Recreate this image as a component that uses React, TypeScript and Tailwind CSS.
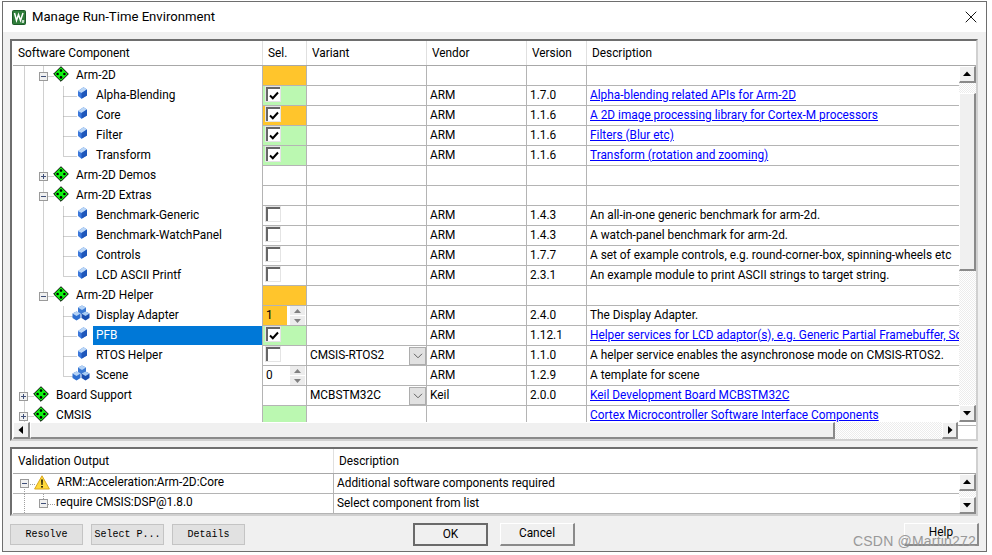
import React from 'react';
import { X } from 'lucide-react';

const FONT = "font-['Roboto',sans-serif]";

// ---------- drawn icons ----------
const Diamond = () => (
  <svg width="16" height="16" viewBox="0 0 16 16" className="shrink-0">
    <path d="M8 .7 15.3 8 8 15.3 .7 8Z" fill="#10f510" stroke="#000" />
    <circle cx="8" cy="4.6" r="1.3" fill="#000" />
    <circle cx="8" cy="11.4" r="1.3" fill="#000" />
    <circle cx="4.6" cy="8" r="1.3" fill="#000" />
    <circle cx="11.4" cy="8" r="1.3" fill="#000" />
  </svg>
);

const Gem = () => (
  <svg width="9" height="12" viewBox="0 0 9 12" className="shrink-0">
    <path d="M5.5 .3 9 2.5v6L3.5 11.7 0 9V4Z" fill="#3b78dc" />
    <path d="M5.5 .3 9 2.5 3.5 6 0 4Z" fill="#bcd8f7" />
    <path d="M3.5 6 9 2.5v6L3.5 11.7Z" fill="#1f57bb" />
  </svg>
);

const Bundle = () => (
  <svg width="18" height="16" viewBox="0 0 18 16" className="shrink-0">
    <path d="M10 .5 14 2.5v4.5L10 9.5 6 7V2.5Z" fill="#3a78d4" />
    <path d="M10 .5 14 2.5 10 5 6 2.5Z" fill="#b4d2f5" />
    <path d="M4.5 6.5 8.5 8.5v4.5l-4 2.5-4-2.5V8.5Z" fill="#2f6fd0" />
    <path d="M4.5 6.5 8.5 8.5l-4 2.5-4-2.5Z" fill="#b4d2f5" />
    <path d="M13.5 6.5 17.5 8.5v4.5l-4 2.5-4-2.5V8.5Z" fill="#1b4fb0" />
    <path d="M13.5 6.5 17.5 8.5l-4 2.5-4-2.5Z" fill="#a9ccf3" />
  </svg>
);

const Warning = () => (
  <svg width="16" height="15" viewBox="0 0 16 15" className="shrink-0">
    <path d="M8 .8 15.4 14H.6Z" fill="#ffd93b" stroke="#d8a520" strokeLinejoin="round" />
    <path d="M7.2 4.5h1.6l-.3 5.5h-1Z" fill="#000" />
    <rect x="7.2" y="11" width="1.6" height="1.6" fill="#000" />
  </svg>
);

const AppIcon = () => (
  <svg width="14" height="15" viewBox="0 0 14 15" className="shrink-0">
    <rect x=".5" y=".5" width="13" height="14" rx="1" fill="#2f7d3a" stroke="#1c5a28" />
    <path d="M2.5 3 4.5 10.5 6.5 4.5 8.5 10.5 11 3" fill="none" stroke="#fff" strokeWidth="1.5" />
    <path d="M10 10.5h2v1h-2v1h2" fill="none" stroke="#fff" strokeWidth=".7" />
  </svg>
);

const Expander = ({ open }: { open: boolean }) => (
  <span className="w-[9px] h-[9px] border border-[#9a9a9a] bg-[#f0f0f0] flex items-center justify-center relative shrink-0">
    <span className="w-[5px] h-px bg-[#3f4f78]" />
    {!open && <span className="absolute w-px h-[5px] bg-[#3f4f78]" />}
  </span>
);

const Tri = ({ dir }: { dir: 'up' | 'down' | 'left' | 'right' }) => {
  const d = { up: 'M4 1.5 8 6H0Z', down: 'M0 2H8L4 6.5Z', left: 'M6 0V8L1.5 4Z', right: 'M2 0V8L6.5 4Z' }[dir];
  return (
    <svg width="8" height="8" viewBox="0 0 8 8">
      <path d={d} fill="#000" />
    </svg>
  );
};

const RAISED = 'bg-[#f0f0f0] border-t border-l border-white border-r-2 border-b-2 border-r-[#8a8a8a] border-b-[#8a8a8a]';

const ScrollBtn = ({ dir, className = '' }: { dir: 'up' | 'down' | 'left' | 'right'; className?: string }) => (
  <div className={`${RAISED} flex items-center justify-center shrink-0 ${className}`}>
    <Tri dir={dir} />
  </div>
);

const DITHER = 'bg-[repeating-conic-gradient(#ececec_0_25%,#ffffff_0_50%)] bg-[length:2px_2px]';

const Check = ({ on }: { on: boolean }) => (
  <span className="w-[16px] h-[16px] ml-[2px] mb-[3px] border border-[#e4e4e4] shrink-0 flex">
    <span className="flex-1 border-t-2 border-l-2 border-t-[#666666] border-l-[#666666] bg-white flex items-center justify-center">
      {on && (
        <svg width="10" height="9" viewBox="0 0 10 9">
          <path d="M1 4.5 3.8 7.2 9 1.5" fill="none" stroke="#000" strokeWidth="2" />
        </svg>
      )}
    </span>
  </span>
);

const Spin = ({ value, bg }: { value: string; bg: string }) => (
  <div className="flex h-full w-full bg-white">
    <span className={`w-[24px] pl-[3px] leading-[19px] ${bg}`}>{value}</span>
    <span className="ml-[3px] w-[15px] flex flex-col justify-center gap-px">
      <span className="h-[9px] bg-[#ececec] flex items-center justify-center">
        <svg width="7" height="4" viewBox="0 0 7 4"><path d="M3.5 0 7 4H0Z" fill="#808080" /></svg>
      </span>
      <span className="h-[9px] bg-[#ececec] flex items-center justify-center">
        <svg width="7" height="4" viewBox="0 0 7 4"><path d="M0 0H7L3.5 4Z" fill="#808080" /></svg>
      </span>
    </span>
  </div>
);

const Combo = ({ value }: { value: string }) => (
  <div className="flex h-full w-full items-center justify-between">
    <span className="pl-[3px]">{value}</span>
    <span className="w-[17px] h-[18px] bg-[#e1e1e1] border border-[#adadad] flex items-center justify-center">
      <svg width="10" height="6" viewBox="0 0 10 6"><path d="M1 .8 5 4.8 9 .8" fill="none" stroke="#606060" /></svg>
    </span>
  </div>
);

// ---------- tree guide lines, one small drawing per row ----------
const DOT = { stroke: '#a0a0a0', strokeDasharray: '1 1' };

const Guides = ({ lines }: { lines: number[][] }) => (
  <svg width="249" height="20" className="absolute left-0 top-0 pointer-events-none">
    {lines.map((l, i) => (
      <line key={i} x1={l[0] + 0.5} y1={l[1] + 0.5} x2={l[2] + 0.5} y2={l[3] + 0.5} style={DOT} />
    ))}
  </svg>
);

type Row = {
  name: string;
  level: 0 | 1 | 2;
  icon: 'diamond' | 'gem' | 'bundle';
  open?: boolean;
  // guide lines in cell coordinates
  lines: number[][];
  selBg?: string;
  sel?: React.ReactNode;
  variant?: React.ReactNode;
  vendor?: string;
  version?: string;
  desc?: string;
  link?: boolean;
  active?: boolean;
};

const ORANGE = 'bg-[#ffc52c]';
const GREEN = 'bg-[#bbf8b1]';

const L0 = [11, 0, 11, 20];
const L1 = [30, 0, 30, 20];
const L1Half = [30, 0, 30, 10];
const L2 = [50, 0, 50, 20];
const L2Half = [50, 0, 50, 10];
const H2 = [50, 10, 64, 10];
const H1 = [35, 10, 41, 10];
const H0 = [15, 10, 21, 10];

const rows: Row[] = [
  { name: 'Arm-2D', level: 1, icon: 'diamond', open: true, lines: [L0, L1, H1], selBg: ORANGE },
  { name: 'Alpha-Blending', level: 2, icon: 'gem', lines: [L0, L1, L2, H2], selBg: GREEN, sel: <Check on />, vendor: 'ARM', version: '1.7.0', desc: 'Alpha-blending related APIs for Arm-2D', link: true },
  { name: 'Core', level: 2, icon: 'gem', lines: [L0, L1, L2, H2], selBg: ORANGE, sel: <Check on />, vendor: 'ARM', version: '1.1.6', desc: 'A 2D image processing library for Cortex-M processors', link: true },
  { name: 'Filter', level: 2, icon: 'gem', lines: [L0, L1, L2, H2], selBg: GREEN, sel: <Check on />, vendor: 'ARM', version: '1.1.6', desc: 'Filters (Blur etc)', link: true },
  { name: 'Transform', level: 2, icon: 'gem', lines: [L0, L1, L2Half, H2], selBg: GREEN, sel: <Check on />, vendor: 'ARM', version: '1.1.6', desc: 'Transform (rotation and zooming)', link: true },
  { name: 'Arm-2D Demos', level: 1, icon: 'diamond', open: false, lines: [L0, L1, H1] },
  { name: 'Arm-2D Extras', level: 1, icon: 'diamond', open: true, lines: [L0, L1, H1] },
  { name: 'Benchmark-Generic', level: 2, icon: 'gem', lines: [L0, L1, L2, H2], sel: <Check on={false} />, vendor: 'ARM', version: '1.4.3', desc: 'An all-in-one generic benchmark for arm-2d.' },
  { name: 'Benchmark-WatchPanel', level: 2, icon: 'gem', lines: [L0, L1, L2, H2], sel: <Check on={false} />, vendor: 'ARM', version: '1.4.3', desc: 'A watch-panel benchmark for arm-2d.' },
  { name: 'Controls', level: 2, icon: 'gem', lines: [L0, L1, L2, H2], sel: <Check on={false} />, vendor: 'ARM', version: '1.7.7', desc: 'A set of example controls, e.g. round-corner-box, spinning-wheels etc' },
  { name: 'LCD ASCII Printf', level: 2, icon: 'gem', lines: [L0, L1, L2Half, H2], sel: <Check on={false} />, vendor: 'ARM', version: '2.3.1', desc: 'An example module to print ASCII strings to target string.' },
  { name: 'Arm-2D Helper', level: 1, icon: 'diamond', open: true, lines: [L0, L1Half, H1], selBg: ORANGE },
  { name: 'Display Adapter', level: 2, icon: 'bundle', lines: [L0, L2, H2], sel: <Spin value="1" bg={ORANGE} />, vendor: 'ARM', version: '2.4.0', desc: 'The Display Adapter.' },
  { name: 'PFB', level: 2, icon: 'gem', active: true, lines: [L0, L2, H2], selBg: GREEN, sel: <Check on />, vendor: 'ARM', version: '1.12.1', desc: 'Helper services for LCD adaptor(s), e.g. Generic Partial Framebuffer, Scanline', link: true },
  { name: 'RTOS Helper', level: 2, icon: 'gem', lines: [L0, L2, H2], sel: <Check on={false} />, variant: <Combo value="CMSIS-RTOS2" />, vendor: 'ARM', version: '1.1.0', desc: 'A helper service enables the asynchronose mode on CMSIS-RTOS2.' },
  { name: 'Scene', level: 2, icon: 'bundle', lines: [L0, L2Half, H2], sel: <Spin value="0" bg="bg-white" />, vendor: 'ARM', version: '1.2.9', desc: 'A template for scene' },
  { name: 'Board Support', level: 0, icon: 'diamond', open: false, lines: [L0, H0], variant: <Combo value="MCBSTM32C" />, vendor: 'Keil', version: '2.0.0', desc: 'Keil Development Board MCBSTM32C', link: true },
  { name: 'CMSIS', level: 0, icon: 'diamond', open: false, lines: [L0, H0], selBg: GREEN, desc: 'Cortex Microcontroller Software Interface Components', link: true },
];

const TreeCell = ({ r }: { r: Row }) => {
  const expLeft = r.level === 0 ? 'ml-[6px]' : 'ml-[26px]';
  return (
    <div className="relative w-[249px] h-full shrink-0 flex items-center">
      <Guides lines={r.lines} />
      {r.level === 2 ? (
        <>
          <span className="relative w-[80px] flex justify-end pr-[3px] shrink-0">
            {r.icon === 'bundle' ? <span className="mb-[7px]"><Bundle /></span> : <span className="mr-[3px] mb-[6px]"><Gem /></span>}
          </span>
          <span className={`relative self-start h-[19px] w-full pl-[3px] leading-[19px] ${r.active ? 'bg-[#0078d7] text-white' : ''}`}>{r.name}</span>
        </>
      ) : (
        <>
          <span className={`relative ${expLeft}`}><Expander open={!!r.open} /></span>
          <span className="relative ml-[5px] mb-[5px]"><Diamond /></span>
          <span className="relative ml-[7px]">{r.name}</span>
        </>
      )}
    </div>
  );
};

const Cell = ({ w, className = '', children }: { w: string; className?: string; children?: React.ReactNode }) => (
  <div className={`${w} h-full shrink-0 border-l border-[#b4b4b4] flex items-center overflow-hidden whitespace-nowrap ${className}`}>{children}</div>
);

const TableRow = ({ r }: { r: Row }) => (
  <div className="flex h-[20px] shrink-0">
    <TreeCell r={r} />
    <div className="flex flex-1 border-b border-[#b4b4b4] min-w-0">
      <Cell w="w-[44px]" className={r.selBg ?? ''}>{r.sel}</Cell>
      <Cell w="w-[120px]">{r.variant}</Cell>
      <Cell w="w-[100px]" className="pl-[3px]">{r.vendor}</Cell>
      <Cell w="w-[60px]" className="pl-[3px]">{r.version}</Cell>
      <Cell w="flex-1 min-w-0" className="pl-[3px]">
        {r.link ? <a className="text-[#0000ff] underline">{r.desc}</a> : r.desc}
      </Cell>
    </div>
  </div>
);

const HeadCell = ({ w, label, className = '' }: { w: string; label: string; className?: string }) => (
  <div className={`${w} h-full shrink-0 flex items-center pt-px ${className}`}>{label}</div>
);

const FlatButton = ({ label, className = '' }: { label: string; className?: string }) => (
  <button className={`w-[73px] h-[21px] bg-[#e1e1e1] border border-[#c4c4c4] font-['Liberation_Mono',monospace] text-[10px] ${className}`}>{label}</button>
);

export default function App() {
  return (
    <div className={`w-[992px] h-[555px] bg-white overflow-hidden relative text-[11.85px] text-black ${FONT}`}>
      <div className="w-[985px] h-[551px] ml-[2px] mt-px border border-[#6e6e6e] bg-[#f0f0f0] flex flex-col">
        {/* Title bar */}
        <div className="h-[30px] bg-white flex items-center shrink-0 pl-[9px] pr-[5px]">
          <AppIcon />
          <span className="ml-[6px] text-[13.15px]">Manage Run-Time Environment</span>
          <X size={20} strokeWidth={1.1} className="ml-auto -mt-px" />
        </div>

        {/* Components panel */}
        <div className="mt-[7px] ml-[7px] w-[968px] h-[402px] shrink-0 bg-white border-t-2 border-l-2 border-[#6e6e6e] border-r-2 border-r-[#d0d0d0] border-b-2 border-b-[#d0d0d0] flex flex-col pl-px">
          <div className="h-[25px] flex shrink-0 border-b border-[#a8a8a8]">
            <HeadCell w="w-[249px]" label="Software Component" className="pl-[5px]" />
            <HeadCell w="w-[44px]" label="Sel." className="pl-[5px] border-l border-[#e0e0e0]" />
            <HeadCell w="w-[120px]" label="Variant" className="pl-[5px] border-l border-[#e0e0e0]" />
            <HeadCell w="w-[100px]" label="Vendor" className="pl-[5px] border-l border-[#e0e0e0]" />
            <HeadCell w="w-[60px]" label="Version" className="pl-[5px] border-l border-[#e0e0e0]" />
            <HeadCell w="flex-1" label="Description" className="pl-[5px] border-l border-[#e0e0e0]" />
          </div>
          <div className="flex flex-1 min-h-0">
            <div className="flex-1 min-w-0 h-[356px] overflow-hidden flex flex-col">
              {rows.map((r) => (
                <TableRow key={r.name} r={r} />
              ))}
            </div>
            <div className={`w-[17px] h-[356px] flex flex-col shrink-0 ${DITHER}`}>
              <ScrollBtn dir="up" className="h-[17px]" />
              <div className="h-[10px] shrink-0" />
              <div className={`h-[178px] shrink-0 ${RAISED}`} />
              <ScrollBtn dir="down" className="h-[17px] mt-auto" />
            </div>
          </div>
          {/* Horizontal scroll */}
          <div className="h-[17px] flex shrink-0">
            <div className={`flex w-[945px] ${DITHER}`}>
              <ScrollBtn dir="left" className="w-[17px]" />
              <div className={`w-[805px] shrink-0 ${RAISED}`} />
              <ScrollBtn dir="right" className="w-[16px] ml-auto" />
            </div>
            <div className="flex-1 border-t border-[#b4b4b4] mt-[3px]" />
          </div>
        </div>

        {/* Validation panel */}
        <div className="mt-[6px] ml-[7px] w-[968px] h-[69px] shrink-0 bg-white border-t-2 border-l-2 border-[#6e6e6e] border-r-2 border-r-[#d0d0d0] border-b-2 border-b-[#d0d0d0] flex flex-col pl-px">
          <div className="h-[25px] flex shrink-0 border-b border-[#a8a8a8]">
            <HeadCell w="w-[320px]" label="Validation Output" className="pl-[5px]" />
            <HeadCell w="flex-1" label="Description" className="pl-[5px] border-l border-[#e0e0e0]" />
          </div>
          <div className="flex flex-1 min-h-0">
            <div className="flex-1 min-w-0 flex flex-col">
              <div className="h-[20px] flex border-b border-[#b4b4b4] shrink-0">
                <div className="w-[320px] flex items-center relative shrink-0">
                  <svg width="60" height="20" className="absolute left-0 top-0">
                    <line x1="15" y1="10.5" x2="22" y2="10.5" style={DOT} />
                    <line x1="11.5" y1="15" x2="11.5" y2="20" style={DOT} />
                  </svg>
                  <span className="relative ml-[7px]"><Expander open /></span>
                  <span className="relative ml-[5px] mb-[2px]"><Warning /></span>
                  <span className="relative ml-[7px] mb-px">ARM::Acceleration:Arm-2D:Core</span>
                </div>
                <div className="flex-1 border-l border-[#b4b4b4] pl-[3px] flex items-center">Additional software components required</div>
              </div>
              <div className="h-[20px] flex shrink-0 border-b border-[#b4b4b4]">
                <div className="w-[320px] flex items-center relative shrink-0">
                  <svg width="60" height="20" className="absolute left-0 top-0">
                    <line x1="30.5" y1="0" x2="30.5" y2="6" style={DOT} />
                    <line x1="35" y1="10.5" x2="43" y2="10.5" style={DOT} />
                    <line x1="11.5" y1="0" x2="11.5" y2="20" style={DOT} />
                  </svg>
                  <span className="relative ml-[26px]"><Expander open /></span>
                  <span className="relative ml-[8px] mb-px">require CMSIS:DSP@1.8.0</span>
                </div>
                <div className="flex-1 border-l border-[#b4b4b4] pl-[3px] flex items-center">Select component from list</div>
              </div>
            </div>
            <div className="w-[17px] flex flex-col shrink-0">
              <ScrollBtn dir="up" className="h-[17px] shrink-0" />
              <div className={`flex-1 ${DITHER}`} />
              <ScrollBtn dir="down" className="h-[17px] shrink-0" />
            </div>
          </div>
        </div>

        {/* Buttons */}
        <div className="flex items-center mt-[7px] pl-[7px] pr-[7px] shrink-0">
          <FlatButton label="Resolve" />
          <FlatButton label="Select P..." className="ml-[8px]" />
          <FlatButton label="Details" className="ml-[8px]" />
          <button className="w-[75px] h-[23px] ml-[168px] bg-[#f0f0f0] border-2 border-[#6a6a6a]">OK</button>
          <button className={`w-[75px] h-[23px] ml-[12px] ${RAISED}`}>Cancel</button>
          <button className={`w-[75px] h-[23px] ml-auto ${RAISED} pb-[2px]`}>Help</button>
        </div>
      </div>
      {/* CSDN watermark over the window */}
      <span className="absolute left-[853px] top-[531px] text-[14px] text-[#999999] font-['Liberation_Sans',sans-serif] tracking-[0.2px]">CSDN @Martin272</span>
    </div>
  );
}
